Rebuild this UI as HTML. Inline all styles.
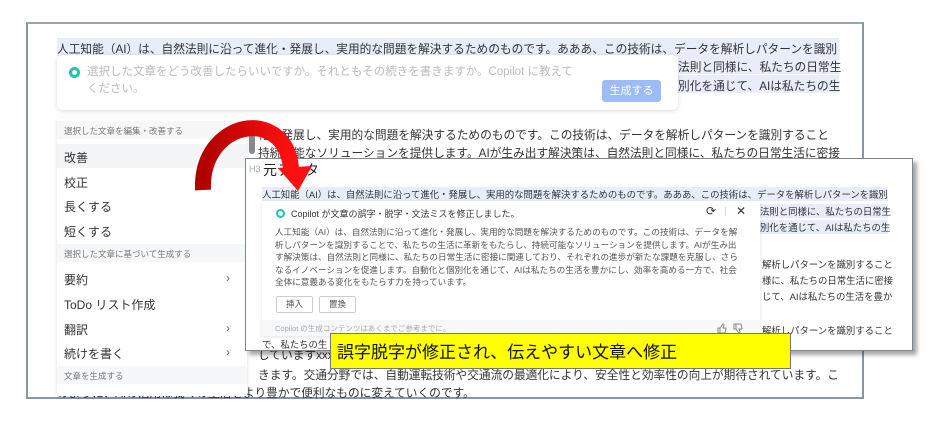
<!DOCTYPE html>
<html><head><meta charset="utf-8"><style>
*{margin:0;padding:0;box-sizing:border-box}
body{width:940px;height:432px;background:#fff;position:relative;overflow:hidden;font-family:"Liberation Sans","Noto Sans CJK JP",sans-serif;color:#333}
.a{position:absolute;white-space:nowrap}
.hl{background:#e8ecfb}
.frame{position:absolute;left:26px;top:22px;width:838px;height:377px;border:2px solid #8a96a3;border-top-color:#9aa3ad}
.t13{font-size:11.7px;color:#333}
.menu{position:absolute;left:57px;top:118px;width:190px;height:278px;background:#fff;box-shadow:0 1px 4px rgba(0,0,0,.12)}
.mh{position:absolute;left:0;width:190px;height:18px;font-size:8.5px;color:#777;background:#f6f7f9;padding:4px 7px}
.mi{position:absolute;left:7px;font-size:12px;color:#333}
.chev{position:absolute;right:10px;font-size:12px;color:#666}
.panel{position:absolute;left:245px;top:158px;width:668px;height:193px;background:#fff;border:1px solid #7d8792;box-shadow:4px 4px 4px rgba(0,0,0,.35)}
.s{font-size:9.4px;color:#333}
</style></head><body>
<div class="frame"></div>
<div class="a t13 hl" style="left:57px;top:38px;width:782px;height:18px;padding-top:2px">人工知能（AI）は、自然法則に沿って進化・発展し、実用的な問題を解決するためのものです。あああ、この技術は、データを解析しパターンを識別</div>
<div class="a t13 hl" style="left:678px;top:56px;width:161px;height:18px;padding-top:2px">法則と同様に、私たちの日常生</div>
<div class="a t13 hl" style="left:678px;top:75px;width:161px;height:18px;padding-top:2px">別化を通じて、AIは私たちの生</div>
<div class="a" style="left:57px;top:55px;width:621px;height:55px;background:#fff;border-radius:6px;box-shadow:0 1px 5px rgba(0,0,0,.15)">
  <div class="a" style="left:12px;top:12px;width:11px;height:11px;border:3px solid #1fc7a8;border-radius:50%"></div>
  <div class="a" style="left:30px;top:9px;font-size:11.5px;color:#bbb;line-height:17px;white-space:normal;width:490px">選択した文章をどう改善したらいいですか。それともその続きを書きますか。Copilot に教えてください。</div>
  <div class="a" style="left:545px;top:25px;width:59px;height:22px;background:#9cbcf7;border-radius:3px;color:#fff;font-size:11px;text-align:center;line-height:22px">生成する</div>
</div>
<div class="a t13" style="left:258px;top:126px">化・発展し、実用的な問題を解決するためのものです。この技術は、データを解析しパターンを識別すること</div>
<div class="a t13" style="left:258px;top:144px">持続可能なソリューションを提供します。AIが生み出す解決策は、自然法則と同様に、私たちの日常生活に密接</div>
<div class="a" style="left:249px;top:124px;width:6px;height:30px;background:#888;border-radius:3px"></div>
<div class="a t13" style="left:258px;top:346px">していますxxxxxxxxxxxxxxxxxxxxxxxxxxxxxxxxxxxxxxxxxxxxxxxxx可能と</div>
<div class="a t13" style="left:258px;top:366px">きます。交通分野では、自動運転技術や交通流の最適化により、安全性と効率性の向上が期待されています。こ</div>
<div class="a t13" style="left:57px;top:384px">のように、AIの活用は我々の生活をより豊かで便利なものに変えていくのです。</div>
<div class="menu">
  <div class="mh" style="top:3px">選択した文章を編集・改善する</div>
  <div class="a" style="left:0;top:26px;width:190px;height:24px;background:#f3f4f6"></div>
  <div class="mi" style="top:31px">改善</div>
  <div class="mi" style="top:56px">校正</div>
  <div class="mi" style="top:80px">長くする</div>
  <div class="mi" style="top:105px">短くする</div>
  <div class="mh" style="top:126px">選択した文章に基づいて生成する</div>
  <div class="mi" style="top:153px;width:176px">要約<span class="chev">›</span></div>
  <div class="mi" style="top:178px">ToDo リスト作成</div>
  <div class="mi" style="top:203px;width:176px">翻訳<span class="chev">›</span></div>
  <div class="mi" style="top:227px;width:176px">続けを書く<span class="chev">›</span></div>
  <div class="mh" style="top:248px">文章を生成する</div>
</div>
<div class="panel">
  <div class="a" style="left:3px;top:5px;font-size:9px;color:#aaa">H3</div>
  <div class="a" style="left:17px;top:1px;font-size:14px;color:#222">元データ</div>
  <div class="a s hl" style="left:16px;top:28px;width:626px;height:14px">人工知能（AI）は、自然法則に沿って進化・発展し、実用的な問題を解決するためのものです。あああ、この技術は、データを解析しパターンを識別</div>
  <div class="a s hl" style="left:514px;top:45px;width:128px;height:14px">法則と同様に、私たちの日常生</div>
  <div class="a s hl" style="left:514px;top:61px;width:128px;height:14px">別化を通じて、AIは私たちの生</div>
  <div class="a s" style="left:516px;top:98px">解析しパターンを識別すること</div>
  <div class="a s" style="left:516px;top:114px">様に、私たちの日常生活に密接</div>
  <div class="a s" style="left:516px;top:130px">じて、AIは私たちの生活を豊か</div>
  <div class="a s" style="left:516px;top:164px">解析しパターンを識別すること</div>
  <div class="a s" style="left:16px;top:178px">で、私たちの生</div>
  <div class="a" style="left:16px;top:42px;width:498px;height:135px;background:#fff;box-shadow:0 1px 4px rgba(0,0,0,.12)">
    <div class="a" style="left:14px;top:8px;width:9px;height:9px;border:2.5px solid #1fc7a8;border-radius:50%"></div>
    <div class="a" style="left:29px;top:6px;font-size:9px;color:#333">Copilot が文章の誤字・脱字・文法ミスを修正しました。</div>
    <div class="a" style="left:444px;top:3px;font-size:12px;color:#333">⟳</div>
    <div class="a" style="left:463px;top:6px;width:1px;height:9px;background:#ddd"></div>
    <div class="a" style="left:474px;top:3px;font-size:12px;color:#333">✕</div>
    <div class="a" style="left:13px;top:25px;width:470px;font-size:8.6px;line-height:12.6px;color:#555;white-space:normal">人工知能（AI）は、自然法則に沿って進化・発展し、実用的な問題を解決するためのものです。この技術は、データを解析しパターンを識別することで、私たちの生活に革新をもたらし、持続可能なソリューションを提供します。AIが生み出す解決策は、自然法則と同様に、私たちの日常生活に密接に関連しており、それぞれの進歩が新たな課題を克服し、さらなるイノベーションを促進します。自動化と個別化を通じて、AIは私たちの生活を豊かにし、効率を高める一方で、社会全体に意義ある変化をもたらす力を持っています。</div>
    <div class="a" style="left:14px;top:95px;width:37px;height:17px;border:1px solid #ccc;border-radius:2px;font-size:8.5px;color:#555;text-align:center;line-height:15px">挿入</div>
    <div class="a" style="left:57px;top:95px;width:37px;height:17px;border:1px solid #ccc;border-radius:2px;font-size:8.5px;color:#555;text-align:center;line-height:15px">置換</div>
    <div class="a" style="left:0;top:119px;width:498px;height:16px;background:#f7f8fa"></div>
    <div class="a" style="left:13px;top:122px;font-size:7.5px;color:#aaa">Copilot の生成コンテンツはあくまでご参考までに。</div>
    <svg class="a" style="left:455px;top:122px" width="30" height="11" fill="none" stroke="#888" stroke-width="1"><path d="M1 5h2v5H1zM3 5l3-4 1 1-1 3h3l-1 5H3"/><path d="M17 6h2V1h-2zM19 6l3 4 1-1-1-3h3l-1-5h-5"/></svg>
  </div>
</div>
<div class="a" style="left:330px;top:333px;width:461px;height:36px;background:#ffff00;border:1px solid #777;font-size:17px;color:#111;padding:4px 6px">誤字脱字が修正され、伝えやすい文章へ修正</div>
<svg class="a" style="left:0;top:0" width="940" height="432">
<defs><linearGradient id="g" x1="0" x2="1"><stop offset="0" stop-color="#b00000"/><stop offset="1" stop-color="#ff1010"/></linearGradient></defs>
<path d="M203 190 C200 120 285 105 291 168" fill="none" stroke="url(#g)" stroke-width="16"/>
<polygon points="278,168 312,166 298,191" fill="#ff1010"/>
</svg>
</body></html>
